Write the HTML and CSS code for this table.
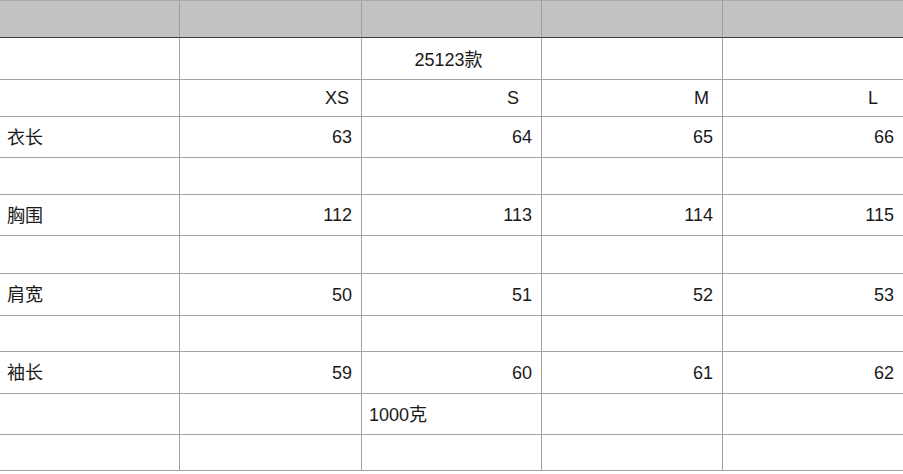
FILE: index.html
```html
<!DOCTYPE html>
<html lang="zh">
<head>
<meta charset="utf-8">
<title>尺码表</title>
<link rel="stylesheet" href="styles.css">
</head>
<body>
<div class="sheet">
  <div class="cell head"></div><div class="cell head"></div><div class="cell head"></div><div class="cell head"></div><div class="cell head"></div>

  <div class="cell"></div><div class="cell"></div><div class="cell center">25123款</div><div class="cell"></div><div class="cell"></div>

  <div class="cell"></div><div class="cell num size-xs">XS</div><div class="cell num size-s">S</div><div class="cell num size-m">M</div><div class="cell num size-l">L</div>

  <div class="cell label">衣长</div><div class="cell num">63</div><div class="cell num">64</div><div class="cell num">65</div><div class="cell num">66</div>

  <div class="cell"></div><div class="cell"></div><div class="cell"></div><div class="cell"></div><div class="cell"></div>

  <div class="cell label">胸围</div><div class="cell num">112</div><div class="cell num">113</div><div class="cell num">114</div><div class="cell num">115</div>

  <div class="cell"></div><div class="cell"></div><div class="cell"></div><div class="cell"></div><div class="cell"></div>

  <div class="cell label">肩宽</div><div class="cell num">50</div><div class="cell num">51</div><div class="cell num">52</div><div class="cell num">53</div>

  <div class="cell"></div><div class="cell"></div><div class="cell"></div><div class="cell"></div><div class="cell"></div>

  <div class="cell label">袖长</div><div class="cell num">59</div><div class="cell num">60</div><div class="cell num">61</div><div class="cell num">62</div>

  <div class="cell"></div><div class="cell"></div><div class="cell label">1000克</div><div class="cell"></div><div class="cell"></div>

  <div class="cell"></div><div class="cell"></div><div class="cell"></div><div class="cell"></div><div class="cell"></div>
</div>
</body>
</html>
```
FILE: styles.css
```css
html, body {
  margin: 0;
  padding: 0;
  background: #ffffff;
}

body {
  font-family: "Liberation Sans", Arial, "Noto Sans CJK SC", sans-serif;
  font-size: 18px;
  color: #1a1a1a;
}

.sheet {
  display: grid;
  grid-template-columns: 180px 182px 180px 181px 190px;
  grid-template-rows: 37px 42px 37px 41px 37px 41px 38px 42px 36px 42px 41px 36px;
  border-top: 1px solid #a8a8a8;
  width: 913px;
}

.cell {
  box-sizing: border-box;
  border-right: 1px solid #a3a3a3;
  border-bottom: 1px solid #a3a3a3;
  display: flex;
  align-items: center;
  padding: 1px 7px 0 7px;
  white-space: nowrap;
}

.label {
  padding-top: 0;
  padding-bottom: 3px;
}

.head {
  background: #c1c2c1;
  border-right-color: #9c9d9c;
  border-bottom-color: #3c3c3c;
}

.num {
  justify-content: flex-end;
  padding-right: 9px;
}

.sheet > .cell:nth-child(5n) {
  padding-right: 18px;
}

.center {
  justify-content: center;
  padding-right: 13px;
  padding-top: 0;
  padding-bottom: 2px;
}

.sheet > .cell.size-xs { padding-right: 12px; }
.sheet > .cell.size-s { padding-right: 22px; }
.sheet > .cell.size-m { padding-right: 13px; }
.sheet > .cell.num.size-l { padding-right: 34px; }
```
